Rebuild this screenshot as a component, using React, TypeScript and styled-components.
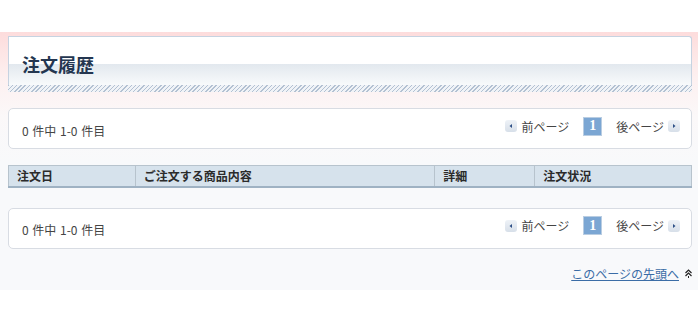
import React, { FC } from 'react';
import styled, { createGlobalStyle } from 'styled-components';

const GlobalStyle = createGlobalStyle`
  html, body {
    margin: 0;
    padding: 0;
    background: #ffffff;
  }
  body {
    font-family: "Noto Sans CJK JP", "Noto Sans", "DejaVu Sans", sans-serif;
    font-size: 12px;
    color: #444;
  }
`;

const Page = styled.div`
  padding-top: 32px;
`;

const Main = styled.div`
  background: linear-gradient(#fddcdc 0, #fdf0f0 45px, #fbf8f9 85px, #f8f9fb 130px);
  padding: 4px 6px 0 8px;
  height: 254px;
`;

const Heading = styled.div`
  height: 49px;
  border: 1px solid #c6d3e1;
  border-bottom: none;
  border-top-right-radius: 3px;
  background: linear-gradient(#ffffff 0, #ffffff 27px, #e2e8ee 27px, #f9fbfc 49px);
  display: flex;
  align-items: center;
  padding: 5px 0 0 13px;
  box-sizing: border-box;
`;

const Title = styled.h2`
  margin: 0;
  font-size: 18px;
  font-weight: bold;
  color: #243650;
`;

const Hatch = styled.div`
  height: 7px;
  background: repeating-linear-gradient(135deg, #b3c1d2 0 1px, #f0f3f7 1px 3px);
`;

const PagerBox = styled.div<{ $top: number }>`
  margin-top: ${p => p.$top}px;
  height: 41px;
  box-sizing: border-box;
  border: 1px solid #d8dce3;
  border-radius: 5px;
  background: #ffffff;
  display: flex;
  align-items: center;
  justify-content: space-between;
  padding: 0 11px 0 13px;
`;

const Count = styled.span`
  font-size: 12px;
  color: #444;
  margin-top: 3px;
  word-spacing: 1px;
`;

const Nav = styled.div`
  display: flex;
  align-items: center;
  margin-bottom: 5px;
`;

const NavLabel = styled.span`
  font-size: 12px;
  color: #444;
  margin: 0 4px;
`;

const ArrowBtn = styled.span`
  width: 12px;
  height: 12px;
  border-radius: 3px;
  background: linear-gradient(#eef2f7, #d7dfe9);
  display: flex;
  align-items: center;
  justify-content: center;
`;

const Current = styled.span`
  width: 19px;
  height: 19px;
  box-sizing: border-box;
  border: 1px solid #b9cde2;
  background: #7ba6d3;
  color: #ffffff;
  font-family: "Liberation Serif", serif;
  font-weight: bold;
  font-size: 14px;
  display: flex;
  align-items: center;
  justify-content: center;
  margin: 0 10px;
`;

const Table = styled.table`
  margin-top: 16px;
  width: 100%;
  border-collapse: collapse;
`;

const Th = styled.th<{ $w: number }>`
  width: ${p => p.$w}px;
  height: 21px;
  padding: 0 0 0 8px;
  text-align: left;
  font-size: 12px;
  font-weight: bold;
  color: #2b2b2b;
  background: #d6e2ec;
  border: 1px solid #b7c3cd;
  border-left-color: #c6d3de;
  border-bottom: 2px solid #9fb2c3;
  box-sizing: border-box;
  &:first-child {
    border-left-color: #b7c3cd;
  }
`;

const Footer = styled.div`
  display: flex;
  justify-content: flex-end;
  align-items: center;
  margin-top: 16px;
  padding-right: 0;
`;

const TopLink = styled.a`
  font-size: 12px;
  color: #3a6ca6;
  text-decoration: underline;
  margin-right: 6px;
`;

const Arrow: FC<{ dir: 'left' | 'right' }> = ({ dir }) => (
  <ArrowBtn>
    <svg width="6" height="6" viewBox="0 0 6 6">
      {dir === 'left' ? (
        <polygon points="4,1 4,5 1.5,3" fill="#2d4f86" />
      ) : (
        <polygon points="2,1 2,5 4.5,3" fill="#2d4f86" />
      )}
    </svg>
  </ArrowBtn>
);

const Pager: FC<{ top: number }> = ({ top }) => (
  <PagerBox $top={top}>
    <Count>0 件中 1-0 件目</Count>
    <Nav>
      <Arrow dir="left" />
      <NavLabel>前ページ</NavLabel>
      <Current>1</Current>
      <NavLabel>後ページ</NavLabel>
      <Arrow dir="right" />
    </Nav>
  </PagerBox>
);

const columns = [
  { label: '注文日', w: 127 },
  { label: 'ご注文する商品内容', w: 300 },
  { label: '詳細', w: 100 },
  { label: '注文状況', w: 157 },
];

export default function App() {
  return (
    <Page>
      <GlobalStyle />
      <Main>
        <Heading>
          <Title>注文履歴</Title>
        </Heading>
        <Hatch />
        <Pager top={16} />
        <Table>
          <thead>
            <tr>
              {columns.map(c => (
                <Th key={c.label} $w={c.w}>{c.label}</Th>
              ))}
            </tr>
          </thead>
        </Table>
        <Pager top={20} />
        <Footer>
          <TopLink href="#top">このページの先頭へ</TopLink>
          <svg width="7" height="9" viewBox="0 0 7 9">
            <path d="M0.5 4 L3.5 1 L6.5 4 M0.5 7 L3.5 4 L6.5 7" stroke="#222" strokeWidth="1.2" fill="none" />
            <rect x="3" y="7" width="1" height="2" fill="#222" />
          </svg>
        </Footer>
      </Main>
    </Page>
  );
}
